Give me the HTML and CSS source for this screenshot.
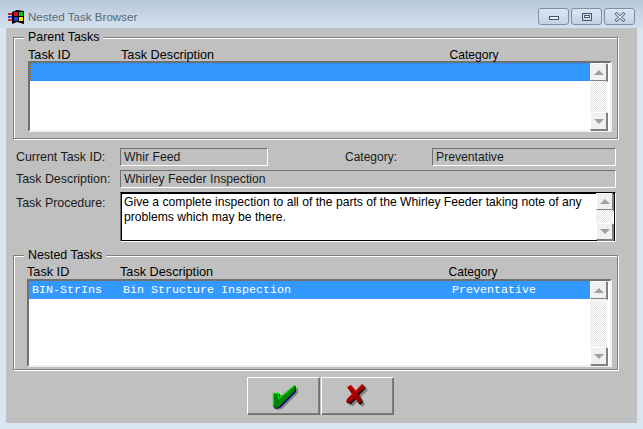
FILE: index.html
```html
<!DOCTYPE html>
<html lang="en">
<head>
  <meta charset="UTF-8">
  <title>Nested Task Browser</title>
  <link rel="stylesheet" href="styles.css">
</head>
<body>
  <div class="titlebar">
    <svg class="app-icon" width="18" height="16" viewBox="0 0 18 16">
      <rect x="1" y="4" width="5" height="2" fill="#e02020"/>
      <rect x="1" y="7" width="5" height="2" fill="#2040e0"/>
      <rect x="1" y="10" width="5" height="2" fill="#e02020"/>
      <path d="M5 3 L10 1 L17 2 V15 L10 13 L5 15 Z" fill="#000"/>
      <rect x="7" y="3" width="4" height="4" fill="#e01010"/>
      <rect x="12" y="3" width="4" height="4" fill="#10c020"/>
      <rect x="7" y="8" width="4" height="4" fill="#2040e0"/>
      <rect x="12" y="8" width="4" height="4" fill="#f0e010"/>
    </svg>
    <span class="title">Nested Task Browser</span>
    <div class="win-buttons">
      <div class="win-btn">
        <svg width="12" height="8" viewBox="0 0 12 8"><rect x="1.5" y="3.5" width="9" height="3" fill="#eef3f8" stroke="#4a5668"/></svg>
      </div>
      <div class="win-btn">
        <svg width="12" height="10" viewBox="0 0 12 10"><rect x="1.5" y="1.5" width="9" height="7" fill="none" stroke="#4a5668"/><rect x="3.5" y="3.5" width="5" height="2" fill="#fff" stroke="#4a5668"/></svg>
      </div>
      <div class="win-btn">
        <svg width="12" height="10" viewBox="0 0 12 10"><path d="M1.5 1 L10.5 9 M10.5 1 L1.5 9" stroke="#4a5668" stroke-width="3"/><path d="M2 1.5 L10 8.5 M10 1.5 L2 8.5" stroke="#f2f5f9" stroke-width="1.2"/></svg>
      </div>
    </div>
  </div>

  <div class="client">
    <fieldset class="group group-parent">
      <legend>Parent Tasks</legend>
      <div class="cols cols-parent">
        <span>Task ID</span>
        <span>Task Description</span>
        <span class="col-cat">Category</span>
      </div>
      <div class="list list-parent">
        <div class="rows">
          <div class="row row-focus"></div>
        </div>
        <div class="scrollbar">
          <div class="sb-btn"><span class="arrow-up"></span></div>
          <div class="sb-track"></div>
          <div class="sb-btn"><span class="arrow-down"></span></div>
        </div>
      </div>
    </fieldset>

    <div class="details">
      <div class="line">
        <span class="label">Current Task ID:</span>
        <div class="field field-id">Whir Feed</div>
        <span class="label label-cat">Category:</span>
        <div class="field field-cat">Preventative</div>
      </div>
      <div class="line">
        <span class="label">Task Description:</span>
        <div class="field field-wide">Whirley Feeder Inspection</div>
      </div>
      <div class="line line-proc">
        <span class="label label-proc">Task Procedure:</span>
        <div class="memo">
          <div class="memo-text">Give a complete inspection to all of the parts of the Whirley Feeder taking note of any problems which may be there.</div>
          <div class="scrollbar">
            <div class="sb-btn"><span class="arrow-up"></span></div>
            <div class="sb-track"></div>
            <div class="sb-btn"><span class="arrow-down"></span></div>
          </div>
        </div>
      </div>
    </div>

    <fieldset class="group group-nested">
      <legend>Nested Tasks</legend>
      <div class="cols cols-nested">
        <span>Task ID</span>
        <span>Task Description</span>
        <span class="col-cat">Category</span>
      </div>
      <div class="list list-nested">
        <div class="rows">
          <div class="row row-data">
            <span>BIN-StrIns</span>
            <span>Bin Structure Inspection</span>
            <span>Preventative</span>
          </div>
        </div>
        <div class="scrollbar">
          <div class="sb-btn"><span class="arrow-up"></span></div>
          <div class="sb-track"></div>
          <div class="sb-btn"><span class="arrow-down"></span></div>
        </div>
      </div>
    </fieldset>

    <div class="actions">
      <button class="action">
        <svg width="31" height="27" viewBox="0 0 31 27">
          <path d="M8 12 H14 V18 L30 4 V10 L14 26 L9 27 L8 25 Z" fill="#808080"/>
          <path d="M6 11 H12 V17 L28 3 V9 L12 25 L7 26 L6 24 Z" fill="#000080"/>
          <path d="M5 10 H11 V16 L27 2 V8 L11 24 L6 25 L5 23 Z" fill="#008000"/>
          <path d="M5.5 22 V10.5 H10.5 V16.5 M11 15.5 L26.5 2.5" fill="none" stroke="#00e000" stroke-width="1.4"/>
        </svg>
      </button>
      <button class="action">
        <svg width="25" height="27" viewBox="0 0 25 27">
          <path d="M5 7 L9 5 L13.500 11 L20 4 L23 7 L16 14 L20 21 L17 24 L13 18 L8 23 L4 22 L5 19 L10 14 Z" fill="#808080"/>
          <path d="M3 5 L7 3 L11.500 9 L18 2 L21 5 L14 12 L18 19 L15 22 L11 16 L6 21 L2 20 L3 17 L8 12 Z" fill="#000"/>
          <path d="M2 4 L6 2 L10.500 8 L17 1 L20 4 L13 11 L17 18 L14 21 L10 15 L5 20 L1 19 L2 16 L7 11 Z" fill="#a00000"/>
          <path d="M2.500 4.500 L6 2.500 L10.500 8.500 L17 1.500 M2.500 16 L7.500 11" fill="none" stroke="#f01010" stroke-width="1"/>
        </svg>
      </button>
    </div>
  </div>
</body>
</html>
```

FILE: styles.css
```css
* {
  box-sizing: border-box;
}

html, body {
  height: 100%;
}

body {
  margin: 0;
  width: 643px;
  height: 429px;
  overflow: hidden;
  display: flex;
  flex-direction: column;
  background: #d8e6f3;
  font-family: "Liberation Sans", Arial, sans-serif;
  font-size: 12.4px;
  color: #000;
}

/* window frame */

.titlebar {
  height: 28px;
  flex: none;
  display: flex;
  align-items: center;
  padding: 5px 6px 0 7px;
  background: linear-gradient(to bottom, #b8c9da 0%, #d3e1ef 100%);
}

.app-icon {
  flex: none;
}

.title {
  margin-left: 3px;
  font-size: 11.6px;
  color: #5a6878;
}

.win-buttons {
  margin-left: auto;
  display: flex;
  gap: 2px;
  padding-right: 2px;
}

.win-btn {
  width: 31px;
  height: 17px;
  display: flex;
  align-items: center;
  justify-content: center;
  border: 1px solid #7d8ea8;
  border-radius: 3px;
  background: linear-gradient(to bottom, #dbe6f2, #c3d3e4);
}

.client {
  flex: 1;
  margin: 0 6px 6px;
  padding: 0 7px;
  background: #c0c0c0;
}

/* group boxes */

.group {
  margin: 0;
  padding: 0;
  width: 605px;
  border: 1px solid #808080;
  box-shadow: inset 1px 1px 0 #fff, 1px 1px 0 #fff;
}

.group legend {
  margin-left: 10px;
  padding: 0 4px;
  line-height: 14px;
  background: #c0c0c0;
}

.group-parent {
  margin-top: 2px;
  height: 109px;
}

.group-nested {
  margin-top: 6px;
  height: 122px;
}

.cols {
  display: flex;
  height: 17px;
  line-height: 14px;
  font-size: 12.7px;
}

.cols span:nth-child(1) {
  width: 93px;
}

.cols span:nth-child(2) {
  width: 328.5px;
}

.cols .col-cat {
  font-size: 12.1px;
}

.cols-parent {
  padding: 4px 0 0 14px;
}

.cols-nested {
  padding: 3px 0 0 13px;
}

/* list boxes */

.list {
  display: flex;
  background: #fff;
  border-top: 2px solid #707070;
  border-left: 2px solid #707070;
  border-bottom: 2px solid #f0f0f0;
  border-right: 2px solid #f0f0f0;
  padding-right: 3px;
}

.list-parent {
  width: 584px;
  height: 71px;
  margin-left: 14px;
}

.list-nested {
  width: 585px;
  height: 88px;
  margin-left: 13px;
}

.rows {
  flex: 1;
}

.row {
  height: 18px;
  background: #3399ff;
}

.row-focus {
  border: 1px dotted #b06a20;
}

.row-data {
  display: flex;
  align-items: center;
  padding-left: 3px;
  color: #fff;
  font-family: "Liberation Mono", "Courier New", monospace;
  font-size: 11.67px;
}

.row-data span:nth-child(1) {
  width: 91px;
}

.row-data span:nth-child(2) {
  width: 329px;
}

/* scroll bars */

.scrollbar {
  flex: none;
  width: 17px;
  display: flex;
  flex-direction: column;
}

.sb-btn {
  flex: none;
  height: 18px;
  display: flex;
  align-items: center;
  justify-content: center;
  background: #f0f0f0;
  border: 1px solid;
  border-color: #fff #808080 #808080 #fff;
  box-shadow: 1px 1px 0 #808080;
}

.sb-track {
  flex: 1;
  background: repeating-conic-gradient(#e4e4e4 0 25%, #fff 0 50%) 0 0 / 2px 2px;
}

.arrow-up,
.arrow-down {
  width: 0;
  height: 0;
  border-left: 5px solid transparent;
  border-right: 5px solid transparent;
}

.arrow-up {
  border-bottom: 5px solid #a0a0a0;
}

.arrow-down {
  border-top: 5px solid #a0a0a0;
}

/* task details */

.details {
  padding: 9px 0 0 3px;
  color: #1a1a1a;
}

.line {
  display: flex;
  align-items: center;
  margin-bottom: 4px;
}

.label {
  width: 104px;
  flex: none;
}

.label-cat {
  width: 87px;
  margin-left: 77px;
  font-size: 12px;
}

.field {
  height: 18px;
  line-height: 16px;
  padding-left: 3px;
  font-size: 12.2px;
  border: 1px solid;
  border-color: #707070 #fff #fff #707070;
}

.field-id {
  width: 148px;
}

.field-cat {
  width: 184px;
}

.field-wide {
  width: 496px;
}

.line-proc {
  align-items: flex-start;
  margin-top: 1px;
  margin-bottom: 0;
}

.label-proc {
  padding-top: 4px;
}

.memo {
  width: 496px;
  height: 50px;
  display: flex;
  background: #fff;
  border: 1px solid;
  border-color: #000 #fff #fff #707070;
  box-shadow: inset 1px 1px 0 #000, inset -1px -1px 0 #000;
  padding-right: 2px;
}

.memo-text {
  flex: 1;
  padding: 2px 3px;
  line-height: 15px;
  font-size: 12.15px;
  color: #000;
}

.memo .scrollbar {
  height: 47px;
}

.memo .sb-btn {
  height: 17px;
}

/* ok / cancel */

.actions {
  display: flex;
  justify-content: center;
  gap: 1px;
  margin-top: 7px;
  padding-right: 2px;
}

.action {
  width: 73px;
  height: 38px;
  padding: 0;
  display: flex;
  align-items: center;
  justify-content: center;
  background: #c0c0c0;
  border: 1px solid;
  border-color: #fff #707070 #707070 #fff;
  box-shadow: inset -1px -1px 0 #808080;
}
```
